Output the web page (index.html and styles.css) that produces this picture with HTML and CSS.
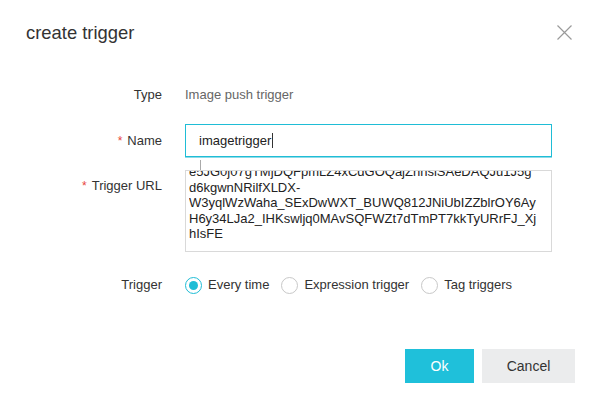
FILE: index.html
```html
<!DOCTYPE html>
<html>
<head>
<meta charset="utf-8">
<link rel="stylesheet" href="styles.css">
</head>
<body>
<div class="dialog">
  <div class="header">
    <div class="title">create trigger</div>
    <svg class="close" width="15" height="15" viewBox="0 0 15 15"><path d="M0.5 0.5 L14.5 14.5 M14.5 0.5 L0.5 14.5" stroke="#9a9a9a" stroke-width="1.2" fill="none"/></svg>
  </div>
  <div class="form">
    <div class="row row-type">
      <div class="label">Type</div>
      <div class="value">Image push trigger</div>
    </div>
    <div class="row row-name">
      <div class="label"><span class="req">*</span>Name</div>
      <div class="input"><span>imagetrigger</span><span class="caret"></span></div>
    </div>
    <div class="row row-url">
      <div class="label label-url"><span class="req">*</span>Trigger URL</div>
      <div class="textarea">
        <div class="lines">
          <div>e5JG0j07gTMjDQFpmLZ4xCdGOQajZhnslSAeDAQJu1J5g</div>
          <div>d6kgwnNRilfXLDX-</div>
          <div>W3yqlWzWaha_SExDwWXT_BUWQ812JNiUbIZZblrOY6Ay</div>
          <div>H6y34LJa2_IHKswljq0MAvSQFWZt7dTmPT7kkTyURrFJ_Xj</div>
          <div>hIsFE</div>
        </div>
      </div>
    </div>
    <div class="row row-trigger">
      <div class="label">Trigger</div>
      <div class="radios">
        <label class="radio"><span class="dot checked"></span>Every time</label>
        <label class="radio"><span class="dot"></span>Expression trigger</label>
        <label class="radio"><span class="dot"></span>Tag triggers</label>
      </div>
    </div>
  </div>
  <div class="footer">
    <button class="btn btn-ok">Ok</button>
    <button class="btn btn-cancel">Cancel</button>
  </div>
</div>
</body>
</html>
```
FILE: styles.css
```css
html, body {
  margin: 0;
  padding: 0;
  background: #fff;
}
body {
  font-family: "Liberation Sans", Arial, sans-serif;
  font-size: 13px;
  color: #333;
  width: 600px;
  height: 408px;
  overflow: hidden;
}
.dialog {
  display: flex;
  flex-direction: column;
}
.header {
  height: 66px;
  display: flex;
  align-items: center;
  justify-content: space-between;
  padding: 0 28px 0 26px;
}
.title {
  font-size: 18.4px;
  color: #333;
}
.close {
  display: block;
  margin-top: -1px;
}
.form {
  display: flex;
  flex-direction: column;
  padding-top: 20px;
}
.row {
  display: flex;
  gap: 23px;
}
.label {
  width: 162px;
  flex-shrink: 0;
  text-align: right;
  line-height: 18px;
  color: #333;
}
.req {
  color: #e8453c;
  margin-right: 5px;
  font-size: 12px;
}
.value {
  line-height: 18px;
  color: #666;
}
.row-name {
  margin-top: 20px;
  align-items: center;
}
.input {
  box-sizing: border-box;
  width: 367px;
  height: 33px;
  border: 1px solid #1fbdd6;
  box-shadow: 0 1px 0 #8fdbe8;
  padding-left: 13px;
  display: flex;
  align-items: center;
  color: #222;
}
.caret {
  display: inline-block;
  width: 1px;
  height: 15px;
  background: #333;
  margin-left: 1px;
}
.row-url {
  margin-top: 13px;
}
.label-url {
  padding-top: 7px;
}
.textarea {
  position: relative;
  box-sizing: border-box;
  width: 367px;
  height: 82px;
  border: 1px solid #d9d9d9;
  padding-left: 3px;
}
.textarea::before {
  content: "";
  position: absolute;
  left: 14px;
  top: -11px;
  width: 1px;
  height: 10px;
  background: #aaa;
}
.lines {
  height: 80px;
  overflow: hidden;
  color: #222;
  line-height: 15.5px;
}
.lines div {
  white-space: nowrap;
}
.lines div:first-child {
  margin-top: -7px;
}
.row-trigger {
  margin-top: 24px;
  align-items: center;
}
.radios {
  display: flex;
  align-items: center;
  gap: 12px;
}
.radio {
  display: flex;
  align-items: center;
  gap: 6px;
  line-height: 18px;
  color: #333;
}
.dot {
  box-sizing: border-box;
  width: 17px;
  height: 17px;
  border-radius: 50%;
  border: 1px solid #c8c8c8;
  display: inline-block;
  position: relative;
}
.dot.checked {
  border-color: #1fbdd6;
}
.dot.checked::after {
  content: "";
  position: absolute;
  left: 3px;
  top: 3px;
  width: 9px;
  height: 9px;
  border-radius: 50%;
  background: #1fbdd6;
}
.footer {
  margin-top: 55px;
  display: flex;
  justify-content: flex-end;
  gap: 8px;
  padding-right: 25px;
}
.btn {
  height: 34px;
  border: none;
  font-family: "Liberation Sans", Arial, sans-serif;
  font-size: 14px;
  padding: 0;
}
.btn-ok {
  width: 69px;
  background: #1fc0da;
  color: #fff;
}
.btn-cancel {
  width: 93px;
  background: #ebeced;
  color: #333;
}
```
